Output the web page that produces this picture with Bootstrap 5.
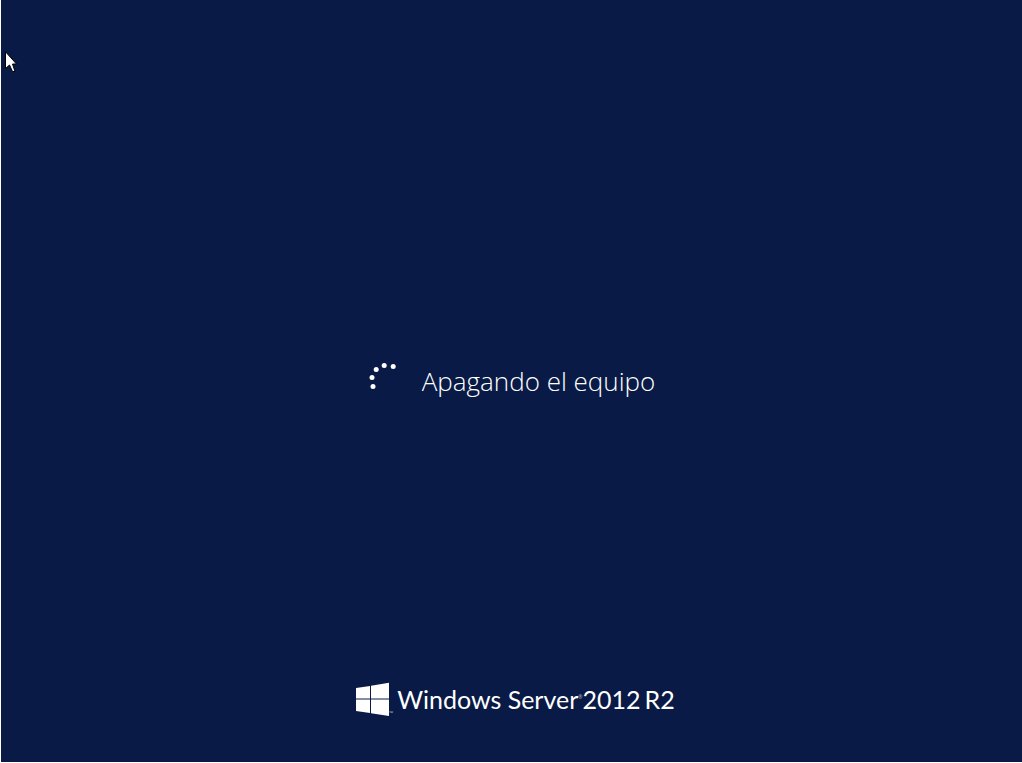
<!DOCTYPE html>
<html lang="es">
<head>
<meta charset="utf-8">
<meta name="viewport" content="width=device-width, initial-scale=1">
<title>Apagando el equipo</title>
<link href="https://cdn.jsdelivr.net/npm/bootstrap@5.3.0/dist/css/bootstrap.min.css" rel="stylesheet">
<style>
  body { background: #081a45; color: #fff; font-family: "Open Sans", "Noto Sans", sans-serif; }
  .screen { display: grid; grid-template-rows: 1fr auto 1fr; border-left: 1px solid #fff; border-bottom: 1px solid #fff; }
  .status-text { font-size: 26px; line-height: 36px; font-weight: 300; }
  .brand { padding-bottom: 46px; }
  .brand-name { font-family: Lato, sans-serif; font-size: 25px; line-height: 34px; }
  .tiny-mark { font-family: "Open Sans", sans-serif; font-size: 5px; line-height: 6px; opacity: .7; }
  .pointer { top: 51px; left: 5px; }
</style>
</head>
<body>
<main class="screen min-vh-100">
  <div></div>
  <div class="d-flex justify-content-center align-items-center" role="status">
    <svg class="me-4 mb-2" width="30" height="32" viewBox="0 0 30 32" fill="#fff" aria-hidden="true">
      <circle cx="5" cy="25.500" r="2.500"/><circle cx="4" cy="16.500" r="2.500"/><circle cx="8.200" cy="8.500" r="2.500"/><circle cx="16.200" cy="4.400" r="2.500"/><circle cx="25.200" cy="5.400" r="2.500"/>
    </svg>
    <h1 class="status-text m-0">Apagando el equipo</h1>
  </div>
  <div class="brand d-flex justify-content-center align-items-end ps-2">
    <svg width="33" height="34" viewBox="0 0 33 34" fill="#fff" aria-hidden="true">
      <path d="M0 6 14 4V16.500H0zM15 3.700 33 .8V16.500H15zM0 17.500H14V31L0 29zM15 17.500H33V34L15 31.300z"/>
    </svg>
    <span class="tiny-mark me-1">™</span>
    <div class="brand-name d-flex"><span>Windows Server</span><span class="tiny-mark pt-2 mt-1">®</span><span class="me-1">2012</span><span>R2</span></div>
  </div>
  <svg class="pointer position-absolute" width="12" height="22" viewBox="0 0 12 22" aria-hidden="true">
    <path d="M.5.800V17.500L4.500 14 7.500 20.500H10L7.500 13H11.500z" fill="#fff" stroke="#000"/>
  </svg>
</main>
<script src="https://cdn.jsdelivr.net/npm/bootstrap@5.3.0/dist/js/bootstrap.bundle.min.js"></script>
</body>
</html>
